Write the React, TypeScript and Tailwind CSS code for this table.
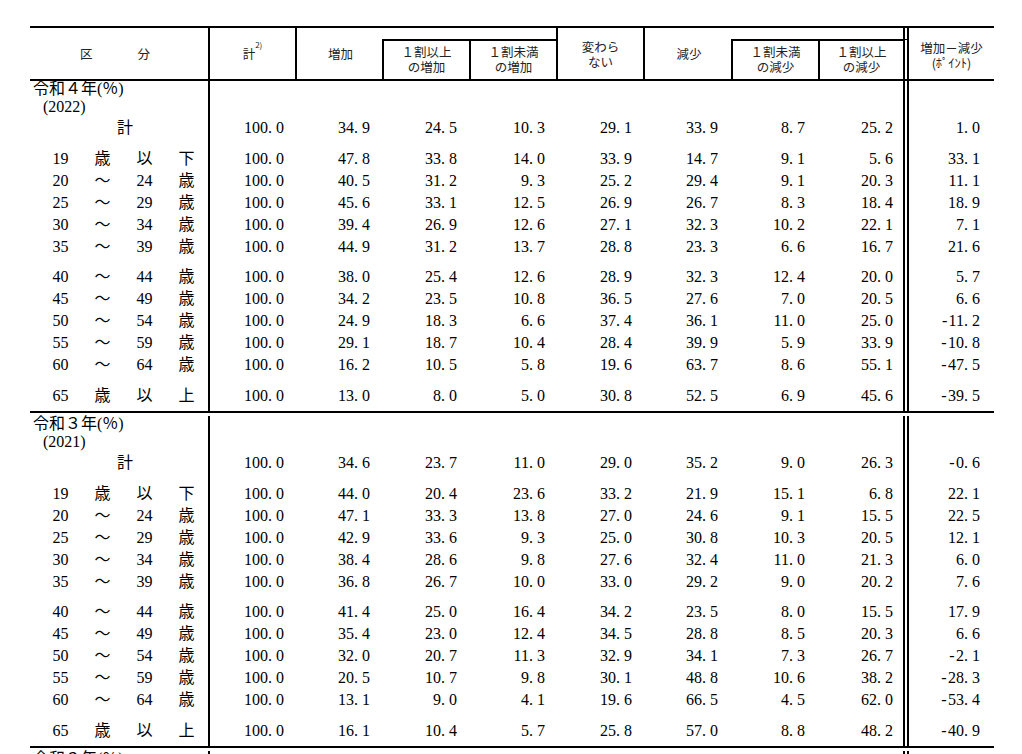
import React from 'react';

const cols = 'grid-cols-[180px_87px_87px_87px_87px_87px_88px_87px_89px_85px]';
const serif = "font-['Liberation_Serif','Noto_Sans_CJK_JP',serif]";
const gothic = "font-['Noto_Sans_CJK_JP','Noto_Sans',sans-serif]";
const pads = [
  'pr-[13px]',
  'pr-[14px]',
  'pr-[14px]',
  'pr-[13px]',
  'pr-[13px]',
  'pr-[15px]',
  'pr-[15px]',
  'pr-[10px]',
  'pr-[14px]',
];
const dbl = 'border-r-[6px] border-double border-black';

type AgeRow = { age: string[]; vals: string[]; gap?: 8 | 9 };

interface SectionData {
  label: string;
  year: string;
  total: string[];
  rows: AgeRow[];
}

const ages = [
  ['19', '歳', '以', '下'],
  ['20', '～', '24', '歳'],
  ['25', '～', '29', '歳'],
  ['30', '～', '34', '歳'],
  ['35', '～', '39', '歳'],
  ['40', '～', '44', '歳'],
  ['45', '～', '49', '歳'],
  ['50', '～', '54', '歳'],
  ['55', '～', '59', '歳'],
  ['60', '～', '64', '歳'],
  ['65', '歳', '以', '上'],
];

function makeRows(data: string[]): AgeRow[] {
  return data.map((line, i) => ({
    age: ages[i],
    vals: line.split(' '),
    gap: i === 0 ? 9 : i === 5 ? 8 : i === 10 ? 9 : undefined,
  }));
}

const sections: SectionData[] = [
  {
    label: '令和４年(％)',
    year: '(2022)',
    total: '100.0 34.9 24.5 10.3 29.1 33.9 8.7 25.2 1.0'.split(' '),
    rows: makeRows([
      '100.0 47.8 33.8 14.0 33.9 14.7 9.1 5.6 33.1',
      '100.0 40.5 31.2 9.3 25.2 29.4 9.1 20.3 11.1',
      '100.0 45.6 33.1 12.5 26.9 26.7 8.3 18.4 18.9',
      '100.0 39.4 26.9 12.6 27.1 32.3 10.2 22.1 7.1',
      '100.0 44.9 31.2 13.7 28.8 23.3 6.6 16.7 21.6',
      '100.0 38.0 25.4 12.6 28.9 32.3 12.4 20.0 5.7',
      '100.0 34.2 23.5 10.8 36.5 27.6 7.0 20.5 6.6',
      '100.0 24.9 18.3 6.6 37.4 36.1 11.0 25.0 -11.2',
      '100.0 29.1 18.7 10.4 28.4 39.9 5.9 33.9 -10.8',
      '100.0 16.2 10.5 5.8 19.6 63.7 8.6 55.1 -47.5',
      '100.0 13.0 8.0 5.0 30.8 52.5 6.9 45.6 -39.5',
    ]),
  },
  {
    label: '令和３年(％)',
    year: '(2021)',
    total: '100.0 34.6 23.7 11.0 29.0 35.2 9.0 26.3 -0.6'.split(' '),
    rows: makeRows([
      '100.0 44.0 20.4 23.6 33.2 21.9 15.1 6.8 22.1',
      '100.0 47.1 33.3 13.8 27.0 24.6 9.1 15.5 22.5',
      '100.0 42.9 33.6 9.3 25.0 30.8 10.3 20.5 12.1',
      '100.0 38.4 28.6 9.8 27.6 32.4 11.0 21.3 6.0',
      '100.0 36.8 26.7 10.0 33.0 29.2 9.0 20.2 7.6',
      '100.0 41.4 25.0 16.4 34.2 23.5 8.0 15.5 17.9',
      '100.0 35.4 23.0 12.4 34.5 28.8 8.5 20.3 6.6',
      '100.0 32.0 20.7 11.3 32.9 34.1 7.3 26.7 -2.1',
      '100.0 20.5 10.7 9.8 30.1 48.8 10.6 38.2 -28.3',
      '100.0 13.1 9.0 4.1 19.6 66.5 4.5 62.0 -53.4',
      '100.0 16.1 10.4 5.7 25.8 57.0 8.8 48.2 -40.9',
    ]),
  },
];

// digits are half-width in the source; give "." and "-" a digit-wide box too
function Num({ v }: { v: string }) {
  return (
    <>
      {v.split('').map((c, i) =>
        c === '.' ? (
          <span key={i} className="inline-block w-[8px] text-left">
            .
          </span>
        ) : c === '-' ? (
          <span key={i} className="inline-block w-[8px] text-center">
            -
          </span>
        ) : (
          <React.Fragment key={i}>{c}</React.Fragment>
        )
      )}
    </>
  );
}

function DataRow({
  label,
  vals,
  gap,
}: {
  label: React.ReactNode;
  vals: string[];
  gap?: 8 | 9;
}) {
  const h = gap === 9 ? 'h-[31px]' : gap === 8 ? 'h-[30px]' : 'h-[22px]';
  const pt = gap === 9 ? 'pt-[9px]' : gap === 8 ? 'pt-[8px]' : '';
  return (
    <div className={`grid ${cols} ${h} leading-[22px]`}>
      <div className={`border-r-2 border-black ${pt}`}>{label}</div>
      {vals.map((v, i) => (
        <div
          key={i}
          className={`text-right ${pads[i]} ${pt} ${i === 7 ? dbl : ''}`}
        >
          <Num v={v} />
        </div>
      ))}
    </div>
  );
}

function AgeLabel({ parts }: { parts: string[] }) {
  return (
    <div className="grid grid-cols-[42px_42px_42px_42px] pl-[9.5px] text-center">
      {parts.map((p, i) => (
        <span key={i}>{p}</span>
      ))}
    </div>
  );
}

function LabelBlock({ label, year }: { label: string; year: string }) {
  return (
    <div className={`grid ${cols} h-[36px]`}>
      <div className="border-r-2 border-black pl-[3px]">
        <div className="h-[16px] leading-[16px] whitespace-nowrap">{label}</div>
        <div className="h-[19px] leading-[19px] pl-[10px]">{year}</div>
      </div>
      <div />
      <div />
      <div />
      <div />
      <div />
      <div />
      <div />
      <div className={dbl} />
      <div />
    </div>
  );
}

function Section({ data, first }: { data: SectionData; first?: boolean }) {
  return (
    <div className={`border-b-2 border-black ${first ? '' : 'pt-[3px]'}`}>
      <LabelBlock label={data.label} year={data.year} />
      <DataRow
        label={<span className="pl-[87px]">計</span>}
        vals={data.total}
      />
      {data.rows.map((r, i) => (
        <DataRow
          key={i}
          label={<AgeLabel parts={r.age} />}
          vals={r.vals}
          gap={r.gap}
        />
      ))}
      <div className={`grid ${cols} h-[4px]`}>
        <div className="border-r-2 border-black" />
        <div />
        <div />
        <div />
        <div />
        <div />
        <div />
        <div />
        <div className={dbl} />
        <div />
      </div>
    </div>
  );
}

function Header() {
  const th = 'flex flex-col items-center justify-center text-center';
  return (
    <div
      className={`grid ${cols} grid-rows-[11px_40px] border-y-2 border-black ${gothic} text-[12.5px] leading-[15px] text-[#222]`}
    >
      <div className="flex items-center justify-center col-start-1 row-start-1 row-span-2 border-r-2 border-black gap-[45px] pr-[8px]">
        <span>区</span>
        <span>分</span>
      </div>
      <div className={`${th} col-start-2 row-start-1 row-span-2 border-r-2 border-black`}>
        <span>
          計<sup className="text-[8px] align-top relative top-[-1px]">2)</sup>
        </span>
      </div>
      <div className={`${th} col-start-3 row-start-1 row-span-2`}>
        <span>増加</span>
      </div>
      <div className="col-start-4 col-span-2 row-start-1 border-r-2 border-black" />
      <div className={`${th} col-start-4 row-start-2 border-t-2 border-l-2 border-r-2 border-black -ml-[2px] pb-[3px]`}>
        <span>１割以上</span>
        <span>の増加</span>
      </div>
      <div className={`${th} col-start-5 row-start-2 border-t-2 border-r-2 border-black pb-[3px]`}>
        <span>１割未満</span>
        <span>の増加</span>
      </div>
      <div className={`${th} col-start-6 row-start-1 row-span-2 border-r-2 border-black`}>
        <span>変わら</span>
        <span>ない</span>
      </div>
      <div className={`${th} col-start-7 row-start-1 row-span-2`}>
        <span>減少</span>
      </div>
      <div className={`col-start-8 col-span-2 row-start-1 ${dbl}`} />
      <div className={`${th} col-start-8 row-start-2 border-t-2 border-l-2 border-r-2 border-black -ml-[2px] pb-[3px]`}>
        <span>１割未満</span>
        <span>の減少</span>
      </div>
      <div className={`${th} col-start-9 row-start-2 border-t-2 border-black ${dbl} pb-[3px]`}>
        <span>１割以上</span>
        <span>の減少</span>
      </div>
      <div className={`${th} col-start-10 row-start-1 row-span-2 pt-[2px]`}>
        <span>増加－減少</span>
        <span>(ﾎﾟｲﾝﾄ)</span>
      </div>
    </div>
  );
}

export default function App() {
  return (
    <div className="h-[754px] w-[1022px] overflow-hidden bg-white pt-[26px] pl-[30px]">
      <div className={`w-[964px] text-[16px] text-black ${serif}`}>
        <Header />
        <Section data={sections[0]} first />
        <Section data={sections[1]} />
        <div className="pt-[3px]">
          <LabelBlock label="令和２年(％)" year="(2020)" />
        </div>
      </div>
    </div>
  );
}
